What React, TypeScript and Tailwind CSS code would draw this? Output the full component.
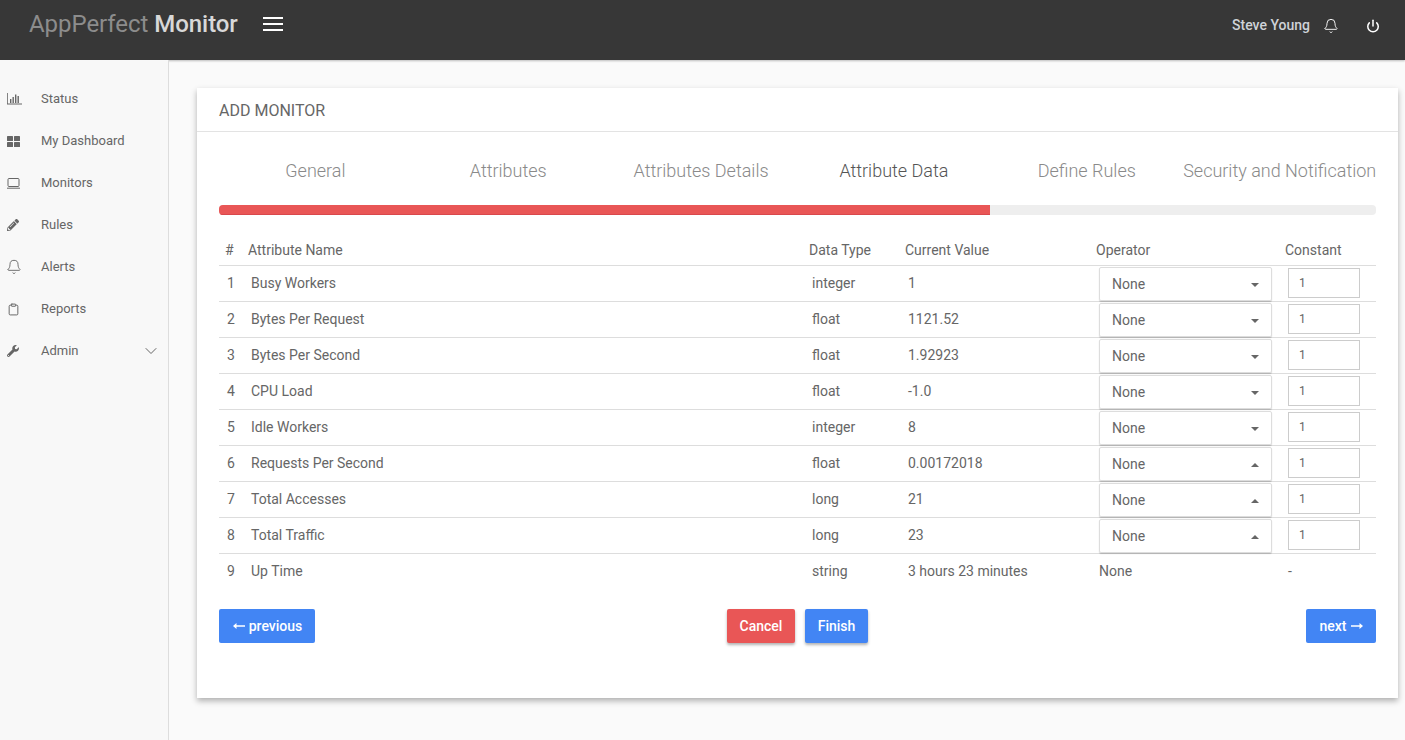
import { Bell, ChevronDown, Clipboard, Power } from 'lucide-react';
import { FaPencilAlt, FaWrench } from 'react-icons/fa';

// small drawn icons, the packages have no close match for these
function ChartIcon() {
  return (
    <svg width="15" height="12" viewBox="0 0 15 12" fill="#666">
      <path d="M0 0h.8v10.6H15v.8H0z" />
      <rect x="3" y="6" width="1.4" height="4" />
      <rect x="5.5" y="4" width="1.4" height="6" />
      <rect x="8" y="1.5" width="1.4" height="8.5" />
      <rect x="10.5" y="3" width="1.4" height="7" />
    </svg>
  );
}

function GridIcon() {
  return (
    <svg width="13" height="11" viewBox="0 0 13 11" fill="#666">
      <rect x="0" y="0" width="6" height="5" rx="0.6" />
      <rect x="7" y="0" width="6" height="5" rx="0.6" />
      <rect x="0" y="6" width="6" height="5" rx="0.6" />
      <rect x="7" y="6" width="6" height="5" rx="0.6" />
    </svg>
  );
}

function LaptopIcon() {
  return (
    <svg width="13" height="11" viewBox="0 0 13 11" fill="none" stroke="#666">
      <rect x="1" y="0.5" width="11" height="8" rx="1" />
      <path d="M0 10.2h13" />
    </svg>
  );
}

function BurgerIcon() {
  return (
    <svg width="20" height="14" viewBox="0 0 20 14" fill="#fff" className="ml-[25px]">
      <rect x="0" y="0" width="20" height="2" />
      <rect x="0" y="6" width="20" height="2" />
      <rect x="0" y="12" width="20" height="2" />
    </svg>
  );
}

function ArrowLeftIcon() {
  return (
    <svg width="12" height="8" viewBox="0 0 12 8" fill="#fff">
      <path d="M12 3.2H3.5V1L0 4l3.5 3V4.8H12z" />
    </svg>
  );
}

function ArrowRightIcon() {
  return (
    <svg width="12" height="8" viewBox="0 0 12 8" fill="#fff">
      <path d="M0 3.2h8.5V1L12 4 8.5 7V4.8H0z" />
    </svg>
  );
}

const navItems = [
  { label: 'Status', icon: <ChartIcon /> },
  { label: 'My Dashboard', icon: <GridIcon /> },
  { label: 'Monitors', icon: <LaptopIcon /> },
  { label: 'Rules', icon: <FaPencilAlt size={12} color="#666" /> },
  { label: 'Alerts', icon: <Bell size={16} color="#666" strokeWidth={1.4} className="-ml-[1px]" /> },
  { label: 'Reports', icon: <Clipboard size={13} color="#666" strokeWidth={1.8} /> },
  { label: 'Admin', icon: <FaWrench size={12} color="#666" /> },
];

const steps = ['General', 'Attributes', 'Attributes Details', 'Attribute Data', 'Define Rules', 'Security and Notification'];

const rows = [
  { name: 'Busy Workers', type: 'integer', value: '1', up: false },
  { name: 'Bytes Per Request', type: 'float', value: '1121.52', up: false },
  { name: 'Bytes Per Second', type: 'float', value: '1.92923', up: false },
  { name: 'CPU Load', type: 'float', value: '-1.0', up: false },
  { name: 'Idle Workers', type: 'integer', value: '8', up: false },
  { name: 'Requests Per Second', type: 'float', value: '0.00172018', up: true },
  { name: 'Total Accesses', type: 'long', value: '21', up: true },
  { name: 'Total Traffic', type: 'long', value: '23', up: true },
];

const gridCols = 'grid grid-cols-[23px_561px_96px_191px_189px_97px]';

export default function App() {
  return (
    <div className="h-[740px] overflow-hidden bg-[#fafafa] text-[14px] text-[#666] font-['Roboto',sans-serif]">
      {/* Top bar */}
      <header className="flex h-[60px] items-start justify-between bg-[#373737] shadow-[0_1px_2px_rgba(0,0,0,0.25)]">
        <div className="flex items-center pt-[8px] pl-[29px]">
          <span className="text-[24px] leading-[32px] tracking-[-0.05px] text-[#8c8c8c]">
            AppPerfect <span className="font-medium text-[#d8d8d8]">Monitor</span>
          </span>
          <BurgerIcon />
        </div>
        <div className="flex items-center pt-[17px] pr-[25px]">
          <span className="text-[14px] leading-[17px] font-medium text-[#cfd3d8]">Steve Young</span>
          <Bell size={16} color="#fff" strokeWidth={1.4} className="ml-[13px]" />
          <Power size={14} color="#fff" strokeWidth={2.6} className="ml-[27px]" />
        </div>
      </header>

      <div className="flex h-[680px]">
        {/* Sidebar */}
        <aside className="w-[169px] shrink-0 border-r border-[#ddd] bg-[#f8f8f8] pt-[18px]">
          {navItems.map((item) => (
            <div key={item.label} className="flex h-[42px] items-center pr-[7px] pl-[7px] text-[13px]">
              <span className="flex w-[34px] shrink-0 items-center">{item.icon}</span>
              <span className="flex-1">{item.label}</span>
              {item.label === 'Admin' && <ChevronDown size={20} color="#666" strokeWidth={1.2} />}
            </div>
          ))}
        </aside>

        {/* Main card */}
        <main className="flex-1 pt-[28px] pl-[28px]">
          <div className="h-[610px] w-[1201px] bg-white shadow-[0_3px_6px_rgba(0,0,0,0.3)]">
            <div className="flex h-[44px] items-center border-b border-[#e3e3e3] pt-[2px] pl-[22px] text-[16px] text-[#666]">
              ADD MONITOR
            </div>

            <div className="px-[22px]">
              <div className="grid grid-cols-6 pt-[26px] text-center text-[18px] leading-[26px] font-light whitespace-nowrap text-[#8a8a8a]">
                {steps.map((step) => (
                  <div key={step} className={step === 'Attribute Data' ? 'text-[#555]' : ''}>
                    {step}
                  </div>
                ))}
              </div>

              {/* Progress */}
              <div className="mt-[21px] h-[10px] overflow-hidden rounded-[4px] bg-[#eee]">
                <div className="h-full w-[771px] border-b border-[#d9484c] bg-[#e95656]" />
              </div>

              {/* Attribute table */}
              <div className={`${gridCols} mt-[20px] h-[31px] items-center border-b border-[#ddd]`}>
                <div className="pl-[6px]">#</div>
                <div className="pl-[6px]">Attribute Name</div>
                <div className="pl-[6px]">Data Type</div>
                <div className="pl-[6px]">Current Value</div>
                <div className="pl-[6px]">Operator</div>
                <div className="pl-[6px]">Constant</div>
              </div>
              {rows.map((row, i) => (
                <div key={row.name} className={`${gridCols} h-[36px] items-center border-b border-[#ddd]`}>
                  <div className="pl-[8px]">{i + 1}</div>
                  <div className="pl-[9px]">{row.name}</div>
                  <div className="pl-[9px]">{row.type}</div>
                  <div className="pl-[9px]">{row.value}</div>
                  <div className="pl-[9px]">
                    <div className="flex h-[34px] w-[173px] items-center justify-between rounded-[2px] border border-[#ddd] pt-[2px] pr-[12px] pl-[12px] shadow-[0_1px_1px_rgba(0,0,0,0.2)]">
                      None
                      {row.up ? (
                        <span className="h-0 w-0 border-x-[4px] border-b-[4px] border-x-transparent border-b-[#666]" />
                      ) : (
                        <span className="h-0 w-0 border-x-[4px] border-t-[4px] border-x-transparent border-t-[#666]" />
                      )}
                    </div>
                  </div>
                  <div className="pb-[1px] pl-[9px]">
                    <div className="flex h-[30px] w-[72px] items-center border border-[#ccc] pl-[10px] text-[12px]">1</div>
                  </div>
                </div>
              ))}
              <div className={`${gridCols} h-[35px] items-center`}>
                <div className="pl-[8px]">9</div>
                <div className="pl-[9px]">Up Time</div>
                <div className="pl-[9px]">string</div>
                <div className="pl-[9px]">3 hours 23 minutes</div>
                <div className="pl-[9px]">None</div>
                <div className="pl-[9px]">-</div>
              </div>

              {/* Wizard buttons */}
              <div className="mt-[20px] flex items-start justify-between font-medium text-white">
                <button className="flex h-[34px] w-[96px] items-center justify-center gap-[4px] rounded-[2px] bg-[#4285f4] pl-[1px]">
                  <ArrowLeftIcon />
                  previous
                </button>
                <div className="mr-[26px] flex gap-[10px]">
                  <button className="h-[34px] w-[68px] rounded-[2px] bg-[#e95656] shadow-[0_2px_3px_rgba(0,0,0,0.3)]">Cancel</button>
                  <button className="h-[34px] w-[63px] rounded-[2px] bg-[#4285f4] shadow-[0_2px_3px_rgba(0,0,0,0.3)]">Finish</button>
                </div>
                <button className="flex h-[34px] w-[70px] items-center justify-center gap-[4px] rounded-[2px] bg-[#4285f4]">
                  next
                  <ArrowRightIcon />
                </button>
              </div>
            </div>
          </div>
        </main>
      </div>
    </div>
  );
}
